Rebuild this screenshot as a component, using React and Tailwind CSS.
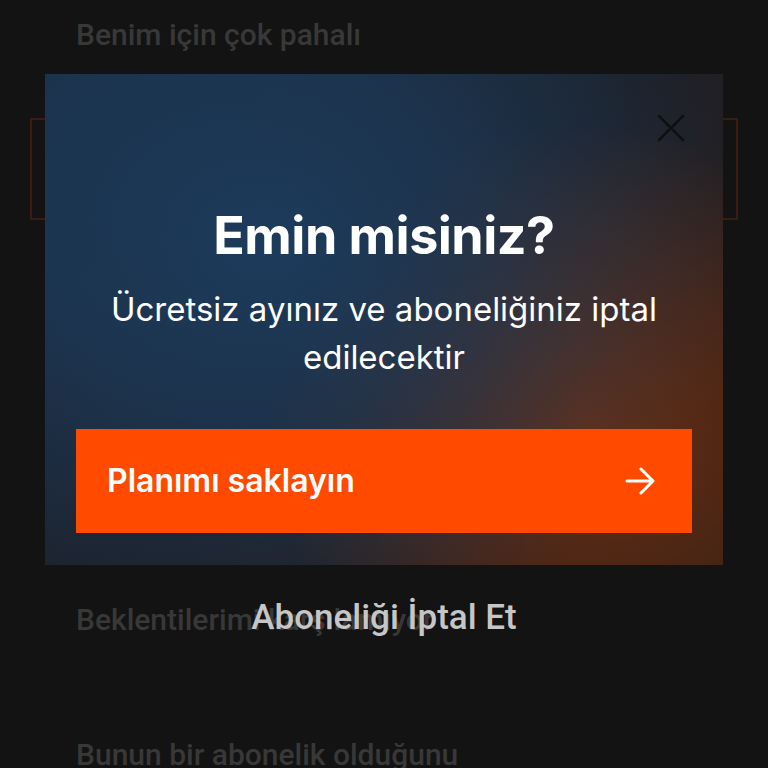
import React from 'react';

const REASONS_TOP = ['Benim için çok pahalı'];
const REASONS_BOTTOM = ['Beklentilerimi karşılamıyor', 'Bunun bir abonelik olduğunu'];

function CloseIcon() {
  return (
    <svg width="28" height="28" viewBox="0 0 28 28" fill="none" stroke="#101010" strokeWidth="2.5" strokeLinecap="round">
      <path d="M2 2L26 26M26 2L2 26" />
    </svg>
  );
}

function ArrowIcon() {
  return (
    <svg width="30" height="30" viewBox="0 0 30 30" fill="none" stroke="#ffffff" strokeWidth="3" strokeLinecap="round" strokeLinejoin="round">
      <path d="M2 15h26M16 3l12 12-12 12" />
    </svg>
  );
}

export default function App() {
  return (
    <div className="relative w-[768px] h-[768px] overflow-hidden bg-[#131313] font-['Roboto',sans-serif]">
      {/* underlying survey list, dimmed */}
      <div className="flex flex-col px-[30px]">
        {REASONS_TOP.map(r => (
          <div key={r} className="h-[68px] flex items-center pl-[46px] text-[30px] font-medium text-[#383838]">
            {r}
          </div>
        ))}
        <div className="mt-[50px] h-[102px] border-2 border-[#3a1d12]" />
        <div className="h-[332px]" />
        {REASONS_BOTTOM.map(r => (
          <div key={r} className="h-[135px] shrink-0 flex items-center pl-[46px] text-[30px] font-medium text-[#383838] whitespace-nowrap">
            {r}
          </div>
        ))}
      </div>

      {/* confirm dialog */}
      <div className="absolute inset-0 flex flex-col items-stretch pt-[74px] px-[45px]">
        <div className="relative h-[491px] flex flex-col items-center px-[31px] pt-[131px] font-['Inter',sans-serif] bg-[radial-gradient(ellipse_480px_400px_at_220px_170px,#1c3b5c_0%,rgba(28,59,92,0.65)_45%,rgba(28,59,92,0)_100%),radial-gradient(ellipse_320px_300px_at_540px_350px,#6a2e12_0%,rgba(106,46,18,0.55)_50%,rgba(106,46,18,0)_100%),linear-gradient(135deg,#1b2c40_0%,#1d2028_50%,#2e1d16_100%)]">
          <button className="absolute top-[40px] right-[38px]">
            <CloseIcon />
          </button>
          <h1 className="text-[52px] leading-[62px] font-bold text-white tracking-[-0.5px] whitespace-nowrap">Emin misiniz?</h1>
          <p className="mt-[18px] text-[33px] leading-[48px] text-white text-center whitespace-nowrap">
            Ücretsiz ayınız ve aboneliğiniz iptal
            <br />
            edilecektir
          </p>
          <button className="mt-[48px] w-full h-[104px] bg-[#ff4a00] flex items-center justify-between pl-[31px] pr-[37px]">
            <span className="text-[32px] font-semibold text-white">Planımı saklayın</span>
            <ArrowIcon />
          </button>
        </div>
        <div className="mt-[33px] text-center text-[35px] leading-[40px] font-medium text-[#c6c6c6]">
          Aboneliği İptal Et
        </div>
      </div>
    </div>
  );
}
